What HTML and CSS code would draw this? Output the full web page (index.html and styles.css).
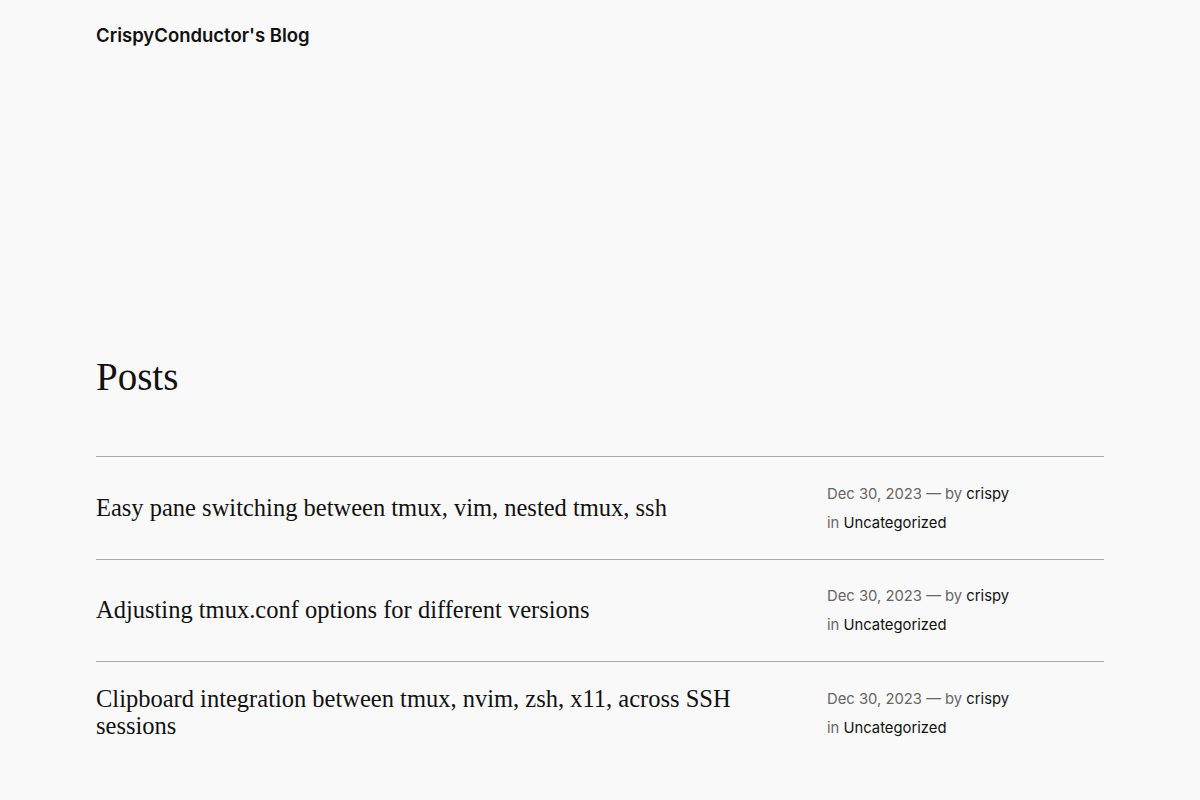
FILE: index.html
```html
<!DOCTYPE html>
<html lang="en">
<head>
  <meta charset="UTF-8" />
  <meta name="viewport" content="width=device-width, initial-scale=1" />
  <title>CrispyConductor's Blog</title>
  <link rel="stylesheet" href="styles.css">
</head>
<body>
  <header class="site-header">
    <a class="site-title" href="#">CrispyConductor's Blog</a>
  </header>

  <main class="site-main">
    <h1 class="page-title">Posts</h1>

    <ul class="post-list">
      <li class="post-row">
        <h2 class="post-title"><a href="#">Easy pane switching between tmux, vim, nested tmux, ssh</a></h2>
        <div class="post-meta">
          <div><span class="muted">Dec 30, 2023 — by</span> <a href="#">crispy</a></div>
          <div><span class="muted">in</span> <a href="#">Uncategorized</a></div>
        </div>
      </li>
      <li class="post-row">
        <h2 class="post-title"><a href="#">Adjusting tmux.conf options for different versions</a></h2>
        <div class="post-meta">
          <div><span class="muted">Dec 30, 2023 — by</span> <a href="#">crispy</a></div>
          <div><span class="muted">in</span> <a href="#">Uncategorized</a></div>
        </div>
      </li>
      <li class="post-row">
        <h2 class="post-title"><a href="#">Clipboard integration between tmux, nvim, zsh, x11, across SSH sessions</a></h2>
        <div class="post-meta">
          <div><span class="muted">Dec 30, 2023 — by</span> <a href="#">crispy</a></div>
          <div><span class="muted">in</span> <a href="#">Uncategorized</a></div>
        </div>
      </li>
    </ul>
  </main>
</body>
</html>
```

FILE: styles.css
```css
body, html {
  margin: 0;
  padding: 0;
  background: #f9f9f9;
  color: #111;
  font-family: Inter, "Noto Sans", sans-serif;
}

a {
  color: inherit;
  text-decoration: none;
}

.site-header {
  padding: 21px 96px 0;
}

.site-title {
  font-size: 18.5px;
  font-weight: 600;
  line-height: 28px;
}

.site-main {
  padding: 304px 96px 0;
}

.page-title {
  margin: 0 0 55px;
  font-family: "Liberation Serif", serif;
  font-weight: 400;
  font-size: 39px;
  line-height: 48px;
}

.post-list {
  list-style: none;
  margin: 0;
  padding: 0;
}

.post-row {
  display: grid;
  grid-template-columns: 1fr 277px;
  column-gap: 24px;
  align-items: center;
  padding: 22.5px 0 21px;
  border-top: 1px solid #aaa;
}

.post-title {
  margin: 0 0 3px;
  font-family: "Liberation Serif", serif;
  font-weight: 400;
  font-size: 24.5px;
  line-height: 27px;
  max-width: 660px;
}

.post-meta {
  font-size: 14.8px;
  line-height: 29px;
  color: #111;
}

.post-meta .muted {
  color: #666;
}
```
